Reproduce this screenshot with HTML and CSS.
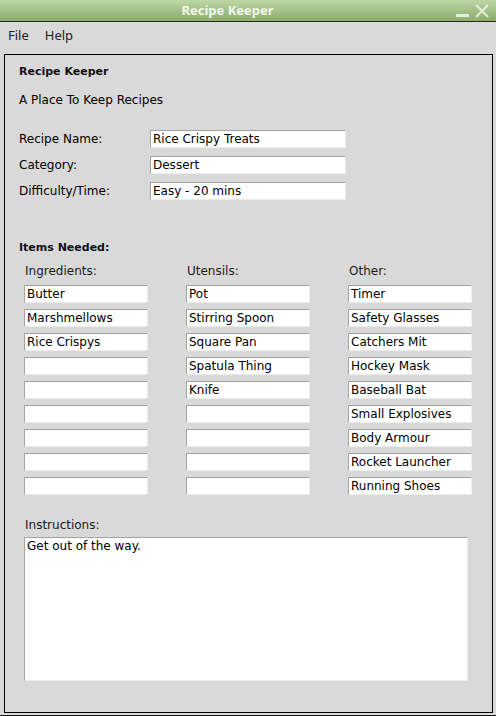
FILE: index.html
```html
<!DOCTYPE html>
<html>
<head>
<meta charset="utf-8">
<title>Recipe Keeper</title>
<link rel="stylesheet" href="styles.css">
</head>
<body>
<div class="window">
  <div class="titlebar">
    <div class="title">Recipe Keeper</div>
    <div class="wbuttons">
      <svg class="wbtn" width="14" height="14" viewBox="0 0 14 14"><rect x="1" y="10" width="13" height="3" fill="#e4eedb"/></svg>
      <svg class="wbtn" width="16" height="14" viewBox="0 0 16 14"><path d="M2 1 L14 13 M14 1 L2 13" stroke="#e4eedb" stroke-width="2" fill="none"/></svg>
    </div>
  </div>
  <div class="menubar">
    <span class="menu">File</span>
    <span class="menu">Help</span>
  </div>
  <div class="panel">
    <div class="heading">Recipe Keeper</div>
    <div class="subtitle">A Place To Keep Recipes</div>
    <div class="form">
      <div class="label">Recipe Name:</div><div class="entry wide">Rice Crispy Treats</div>
      <div class="label">Category:</div><div class="entry wide">Dessert</div>
      <div class="label">Difficulty/Time:</div><div class="entry wide">Easy - 20 mins</div>
    </div>
    <div class="heading items">Items Needed:</div>
    <div class="items-grid">
      <div class="colhead">Ingredients:</div><div class="colhead">Utensils:</div><div class="colhead">Other:</div>
      <div class="entry">Butter</div><div class="entry">Pot</div><div class="entry">Timer</div>
      <div class="entry">Marshmellows</div><div class="entry">Stirring Spoon</div><div class="entry">Safety Glasses</div>
      <div class="entry">Rice Crispys</div><div class="entry">Square Pan</div><div class="entry">Catchers Mit</div>
      <div class="entry"></div><div class="entry">Spatula Thing</div><div class="entry">Hockey Mask</div>
      <div class="entry"></div><div class="entry">Knife</div><div class="entry">Baseball Bat</div>
      <div class="entry"></div><div class="entry"></div><div class="entry">Small Explosives</div>
      <div class="entry"></div><div class="entry"></div><div class="entry">Body Armour</div>
      <div class="entry"></div><div class="entry"></div><div class="entry">Rocket Launcher</div>
      <div class="entry"></div><div class="entry"></div><div class="entry">Running Shoes</div>
    </div>
    <div class="instr-label">Instructions:</div>
    <div class="textarea">Get out of the way.</div>
  </div>
</div>
</body>
</html>
```
FILE: styles.css
```css
html, body {
  margin: 0;
  padding: 0;
}
body {
  width: 496px;
  height: 716px;
  overflow: hidden;
  background: #d9d9d9;
  font-family: "DejaVu Sans", sans-serif;
  font-size: 12px;
  color: #000;
}
.window {
  width: 496px;
  height: 716px;
  box-sizing: border-box;
  border-bottom: 1px solid #111;
  background: #d9d9d9;
}
.titlebar {
  height: 21px;
  border-bottom: 1px solid #2b2b2b;
  background: linear-gradient(#bcd7a5, #8bab6b);
  display: flex;
  align-items: center;
}
.title {
  flex: 1;
  text-align: center;
  font-family: "Noto Sans", "Open Sans", sans-serif;
  font-weight: bold;
  font-size: 13px;
  color: #f2f6ec;
  line-height: 21px;
}
.wbuttons {
  width: 41px;
  display: flex;
  align-items: center;
  gap: 5px;
}
.wbtn {
  display: block;
}
.menubar {
  height: 32px;
  box-sizing: border-box;
  display: flex;
  align-items: center;
  padding: 0 0 6px 8px;
  gap: 16px;
  font-family: "Noto Sans", "Open Sans", sans-serif;
  font-size: 13px;
  color: #1e1e1e;
}
.menu {
  line-height: 20px;
}
.panel {
  margin-left: 4px;
  width: 489px;
  height: 659px;
  box-sizing: border-box;
  border: 1px solid #000;
  padding: 9px 0 0 14px;
}
.heading {
  font-weight: bold;
  font-size: 11px;
  line-height: 16px;
  color: #111;
}
.subtitle {
  line-height: 16px;
  margin-top: 12px;
}
.form {
  margin-top: 22px;
  display: grid;
  grid-template-columns: 131px 196px;
  grid-auto-rows: 18px;
  row-gap: 8px;
  align-items: center;
}
.label {
  line-height: 18px;
}
.entry {
  box-sizing: border-box;
  height: 18px;
  background: #fff;
  border-top: 1px solid #a3a3a3;
  border-left: 1px solid #a3a3a3;
  border-bottom: 1px solid #ececec;
  border-right: 1px solid #ececec;
  padding: 0 2px;
  line-height: 16px;
  white-space: nowrap;
  overflow: hidden;
}
.items {
  margin-top: 40px;
}
.items-grid {
  margin-top: 7px;
  margin-left: 5px;
  display: grid;
  grid-template-columns: 124px 124px 124px;
  column-gap: 38px;
  grid-template-rows: 16px;
  grid-auto-rows: 18px;
  row-gap: 6px;
}
.colhead {
  line-height: 16px;
  padding-left: 1px;
  color: #1a1a1a;
}
.instr-label {
  margin-top: 22px;
  margin-left: 6px;
  line-height: 16px;
  color: #1a1a1a;
}
.textarea {
  margin-top: 4px;
  margin-left: 5px;
  width: 444px;
  height: 144px;
  box-sizing: border-box;
  background: #fff;
  border-top: 1px solid #a3a3a3;
  border-left: 1px solid #a3a3a3;
  border-bottom: 1px solid #ececec;
  border-right: 1px solid #ececec;
  padding: 0 2px;
  line-height: 16px;
}
```
